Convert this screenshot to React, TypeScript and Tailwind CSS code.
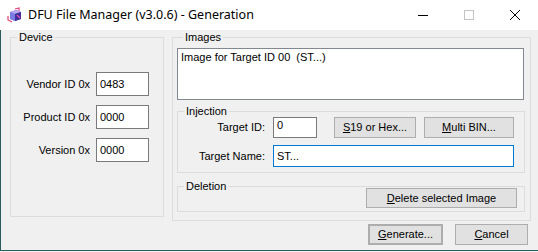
import React from "react";

const font = "font-['Liberation_Sans',Arial,sans-serif] text-[11px]";

const AppIcon = () => (
  <svg width="16" height="16" viewBox="0 0 16 16">
    <path d="M3 5 L9 3 L14 5 L14 12 L8 14 L3 12 Z" fill="#6a5acd" />
    <path d="M3 5 L9 3 L14 5 L8 7 Z" fill="#b7a8f0" />
    <path d="M8 7 L14 5 L14 12 L8 14 Z" fill="#3b2d9a" />
    <path d="M3 5 L8 7 L8 14 L3 12 Z" fill="#7b7be6" />
    <path d="M8 2 L12 1 L12 4" fill="none" stroke="#e0407a" strokeWidth="1.2" />
    <path d="M1 9 L1 13 L5 15" fill="none" stroke="#e0407a" strokeWidth="1.2" />
    <path d="M10 8 L13 11" stroke="#e04fa8" strokeWidth="1.4" />
  </svg>
);

const Btn = ({
  children,
  className = "",
}: {
  children: React.ReactNode;
  className?: string;
}) => (
  <button
    className={`bg-[#e1e1e1] border border-[#adadad] text-black flex items-center justify-center ${className}`}
  >
    {children}
  </button>
);

const Edit = ({
  value,
  className = "",
}: {
  value: string;
  className?: string;
}) => (
  <div
    className={`bg-white border border-[#7a7a7a] px-[3px] flex items-center ${className}`}
  >
    {value}
  </div>
);

export default function App() {
  return (
    <div className={`w-[538px] h-[252px] bg-[#f0f0f0] text-black ${font}`}>
      {/* Title bar */}
      <div className="h-[30px] bg-white flex items-center">
        <div className="pl-[7px] pr-[5px] flex items-center">
          <AppIcon />
        </div>
        <span className="font-['Noto_Sans',sans-serif] text-[12.5px] text-black flex-1">
          DFU File Manager (v3.0.6) - Generation
        </span>
        <div className="flex h-full">
          <div className="w-[46px] h-full flex items-center justify-center">
            <div className="w-[10px] h-px bg-black" />
          </div>
          <div className="w-[46px] h-full flex items-center justify-center">
            <div className="w-[10px] h-[10px] border border-[#c4c4c4]" />
          </div>
          <div className="w-[46px] h-full flex items-center justify-center">
            <svg width="10" height="10" viewBox="0 0 10 10">
              <path d="M0 0 L10 10 M10 0 L0 10" stroke="#000" strokeWidth="1" />
            </svg>
          </div>
        </div>
      </div>

      {/* Body */}
      <div className="h-[221px] border-l border-[#2d5a5a] border-b border-b-[#2d5a5a] pt-px">
        <div className="flex items-start pl-[9px] gap-[8px]">
          {/* Device */}
          <fieldset className="w-[154px] h-[186px] border border-[#dcdcdc]">
            <legend className="ml-[6px] px-[2px] leading-[12px]">Device</legend>
            <div className="flex flex-col gap-[9px] pt-[29px] pr-[14px]">
              <div className="flex items-center justify-end gap-[6px]">
                <span>Vendor ID 0x</span>
                <Edit value="0483" className="w-[53px] h-[24px]" />
              </div>
              <div className="flex items-center justify-end gap-[6px]">
                <span>Product ID 0x</span>
                <Edit value="0000" className="w-[53px] h-[24px]" />
              </div>
              <div className="flex items-center justify-end gap-[6px]">
                <span>Version 0x</span>
                <Edit value="0000" className="w-[53px] h-[24px]" />
              </div>
            </div>
          </fieldset>

          {/* Images */}
          <fieldset className="w-[359px] border border-[#dcdcdc] pl-[4px] pb-[8px]">
            <legend className="ml-[6px] px-[2px] leading-[12px]">Images</legend>
            <div className="mt-[5px] w-[347px] h-[52px] bg-white border border-[#828790] px-[3px] py-[2px] leading-[13px]">
              Image for Target ID 00&nbsp; (ST...)
            </div>

            {/* Injection */}
            <fieldset className="mt-[5px] w-[348px] border border-[#dcdcdc] pb-[5px]">
              <legend className="ml-[6px] px-[2px] leading-[12px]">Injection</legend>
              <div className="grid grid-cols-[87px_1fr] gap-x-[8px] gap-y-[7px]">
                <span className="text-right self-center">Target ID:</span>
                <div className="flex items-center">
                  <div className="w-[44px] h-[21px] bg-white border border-[#7a7a7a] px-[3px] pt-[1px] leading-[13px]">
                    0
                  </div>
                  <Btn className="ml-[17px] w-[82px] h-[21px]">
                    <u>S</u>19 or Hex...
                  </Btn>
                  <Btn className="ml-[8px] w-[90px] h-[21px]">
                    <u>M</u>ulti BIN...
                  </Btn>
                </div>
                <span className="text-right self-center">Target Name:</span>
                <div className="w-[241px] h-[22px] bg-white border border-[#0078d7] px-[3px] flex items-center">
                  ST...
                </div>
              </div>
            </fieldset>

            {/* Deletion */}
            <fieldset className="mt-[7px] w-[348px] border border-[#dcdcdc] pb-[3px]">
              <legend className="ml-[6px] px-[2px] leading-[12px]">Deletion</legend>
              <div className="-mt-[4px] flex justify-end pr-[7px]">
                <Btn className="w-[151px] h-[20px]">
                  <u>D</u>elete selected Image
                </Btn>
              </div>
            </fieldset>
          </fieldset>
        </div>

        {/* Bottom buttons */}
        <div className="flex justify-end gap-[12px] pr-[10px] mt-[3px]">
          <Btn className="w-[75px] h-[21px] border-2 border-[#0078d7]">
            <u>G</u>enerate...
          </Btn>
          <Btn className="w-[73px] h-[21px]">
            <u>C</u>ancel
          </Btn>
        </div>
      </div>
    </div>
  );
}
